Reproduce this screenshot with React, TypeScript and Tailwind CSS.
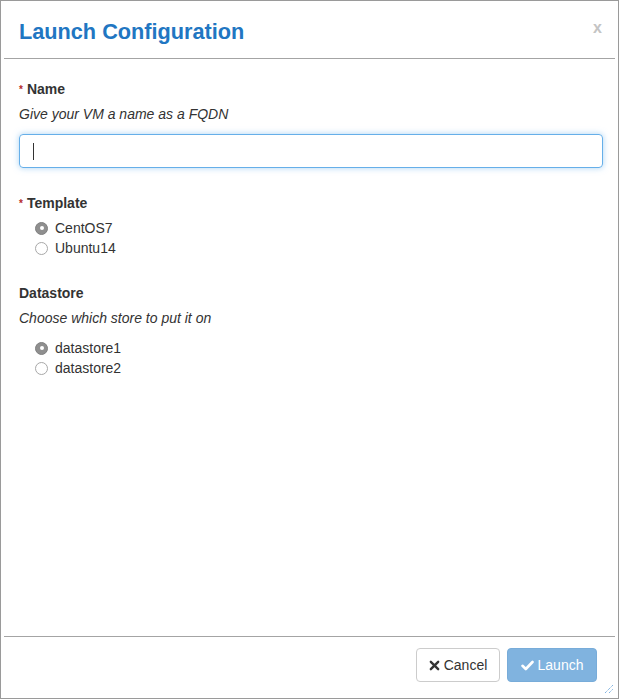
import React from "react";

function Radio({ checked, label }: { checked: boolean; label: string }) {
  return (
    <div className="flex items-center h-[20px] pl-[16px]">
      {checked ? (
        <span className="w-[13px] h-[13px] rounded-full bg-[#8f8f8f] border border-[#808080] flex items-center justify-center">
          <span className="w-[4px] h-[4px] rounded-full bg-white" />
        </span>
      ) : (
        <span className="w-[13px] h-[13px] rounded-full bg-white border border-[#a8a8a8]" />
      )}
      <span className="ml-[7px] text-[14px] text-[#333]">{label}</span>
    </div>
  );
}

export default function App() {
  return (
    <div
      className="w-[619px] h-[699px] border border-[#9a9a9a] bg-white relative flex flex-col"
      style={{ fontFamily: '"Liberation Sans", Arial, sans-serif' }}
    >
      <div className="mx-[3px] h-[58px] border-b border-[#a4a4a4] flex items-center justify-between pl-[15px] pr-[14px] shrink-0">
        <h1 className="text-[21.7px] font-bold text-[#2176c2] leading-none pt-[4px]">Launch Configuration</h1>
        <span className="text-[16px] font-bold text-[#c4c4c4] leading-none mb-[3px] mr-[-1px]">x</span>
      </div>

      <div className="flex-1 px-[18px] pt-[20px] text-[#333]">
        <div className="h-[20px] flex items-center text-[14px] font-bold">
          <span className="text-[#b52a2a] text-[10px] mr-[4px] self-start mt-[3px]">*</span>
          Name
        </div>
        <div className="mt-[5px] h-[20px] flex items-center text-[14px] italic">Give your VM a name as a FQDN</div>
        <div className="mt-[10px] h-[34px] w-[584px] rounded-[4px] border border-[#66afe9] shadow-[0_0_6px_rgba(102,175,233,0.55)] flex items-center pl-[13px]">
          <span className="w-[1px] h-[17px] bg-[#333]" />
        </div>

        <div className="mt-[25px] h-[20px] flex items-center text-[14px] font-bold">
          <span className="text-[#b52a2a] text-[10px] mr-[4px] self-start mt-[3px]">*</span>
          Template
        </div>
        <div className="mt-[5px]">
          <Radio checked label="CentOS7" />
          <Radio checked={false} label="Ubuntu14" />
        </div>

        <div className="mt-[25px] h-[20px] flex items-center text-[14px] font-bold">Datastore</div>
        <div className="mt-[5px] h-[20px] flex items-center text-[14px] italic">Choose which store to put it on</div>
        <div className="mt-[10px]">
          <Radio checked label="datastore1" />
          <Radio checked={false} label="datastore2" />
        </div>
      </div>

      <div className="mx-[3px] border-t border-[#a4a4a4] h-[62px] shrink-0 flex items-start justify-end pr-[18px] pt-[11px] gap-[7px]">
        <button className="h-[34px] w-[84px] rounded-[4px] border border-[#ccc] bg-white text-[14px] text-[#333] flex items-center justify-center gap-[4px]">
          <svg width="11" height="11" viewBox="0 0 12 12">
            <path d="M2 2 L10 10 M10 2 L2 10" stroke="#333" strokeWidth="2.6" strokeLinecap="round" />
          </svg>
          Cancel
        </button>
        <button className="h-[34px] w-[90px] rounded-[4px] bg-[#80b3df] border border-[#78acd9] text-[14px] text-white flex items-center justify-center gap-[4px]">
          <svg width="13" height="11" viewBox="0 0 13 11">
            <path d="M1.5 5.8 L4.8 9 L11.5 2" stroke="#fff" strokeWidth="2.6" fill="none" strokeLinecap="round" strokeLinejoin="round" />
          </svg>
          Launch
        </button>
      </div>

      <svg className="absolute right-[4px] bottom-[4px]" width="10" height="10" viewBox="0 0 10 10">
        <path d="M1 9 L9 1 M5 9 L9 5" stroke="#6aa6dc" strokeWidth="1" strokeDasharray="1.2 0.8" />
      </svg>
    </div>
  );
}
